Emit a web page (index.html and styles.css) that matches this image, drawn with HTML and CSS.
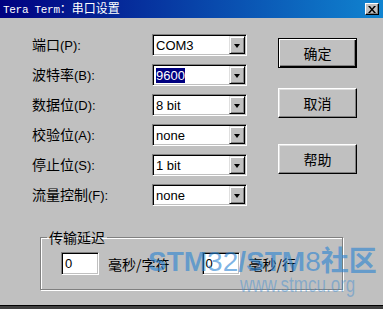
FILE: index.html
```html
<!DOCTYPE html>
<html lang="zh-CN">
<head>
    <meta charset="UTF-8">
    <title>Tera Term: 串口设置</title>
    <link rel="stylesheet" href="styles.css">
</head>
<body>
<div class="window">
    <div class="titlebar">
        <span class="title"><span class="title-en">Tera Term</span>：串口设置</span>
        <span class="close-btn">
            <svg width="8" height="7" viewBox="0 0 8 7"><path d="M0 0h2l2 2.5L6 0h2L5 3.5 8 7H6L4 4.5 2 7H0l3-3.5z" fill="#000"/></svg>
        </span>
    </div>

    <div class="client">
        <div class="top">
            <div class="fields">
                <label>端口<span class="key">(P):</span></label>
                <div class="combo"><span class="combo-text">COM3</span><span class="combo-btn"></span></div>

                <label>波特率<span class="key">(B):</span></label>
                <div class="combo"><span class="combo-text"><span class="selected">9600</span></span><span class="combo-btn"></span></div>

                <label>数据位<span class="key">(D):</span></label>
                <div class="combo"><span class="combo-text">8 bit</span><span class="combo-btn"></span></div>

                <label>校验位<span class="key">(A):</span></label>
                <div class="combo"><span class="combo-text">none</span><span class="combo-btn"></span></div>

                <label>停止位<span class="key">(S):</span></label>
                <div class="combo"><span class="combo-text">1 bit</span><span class="combo-btn"></span></div>

                <label>流量控制<span class="key">(F):</span></label>
                <div class="combo"><span class="combo-text">none</span><span class="combo-btn"></span></div>
            </div>

            <div class="buttons">
                <button class="btn btn-default">确定</button>
                <button class="btn">取消</button>
                <button class="btn btn-help">帮助</button>
            </div>
        </div>

        <fieldset class="delay">
            <legend>传输延迟</legend>
            <div class="delay-row">
                <span class="edit">0</span>
                <span class="unit">毫秒/字符</span>
                <span class="edit edit-second">0</span>
                <span class="unit">毫秒/行</span>
            </div>
        </fieldset>

        <div class="watermark">
            <div class="wm-big">STM<span class="thin">32</span>/STM<span class="thin">8</span>社区</div>
            <div class="wm-url">www.stmcu.org</div>
        </div>
    </div>
</div>
</body>
</html>
```

FILE: styles.css
```css
* {
    margin: 0;
    padding: 0;
    box-sizing: border-box;
}

body {
    background: #404040;
    width: 383px;
    height: 309px;
    overflow: hidden;
}

.window {
    width: 383px;
    height: 306px;
    background: #c0c0c0;
    border-bottom: 1px solid #000;
    display: flex;
    flex-direction: column;
    font-family: "Liberation Sans", "Noto Sans CJK SC", sans-serif;
    font-size: 13px;
    color: #000;
}

/* title bar */
.titlebar {
    height: 18px;
    background: linear-gradient(90deg, #000080, #1084d0);
    display: flex;
    align-items: center;
    justify-content: space-between;
    padding: 0 4px 0 3px;
}

.title {
    color: #fff;
    font-family: "Noto Sans CJK SC", sans-serif;
    font-size: 12px;
    line-height: 16px;
    white-space: nowrap;
}

.title-en {
    font-family: "Liberation Mono", "DejaVu Sans Mono", monospace;
    font-size: 11px;
    letter-spacing: -0.3px;
}

.close-btn {
    width: 14px;
    height: 12px;
    background: #c0c0c0;
    border: 1px solid;
    border-color: #fff #000 #000 #fff;
    box-shadow: inset -1px -1px 0 #808080;
    display: flex;
    align-items: center;
    justify-content: center;
}

/* client area */
.client {
    position: relative;
    flex: 1;
    padding: 16px 0 0 32px;
}

.top {
    display: flex;
}

.fields {
    display: grid;
    grid-template-columns: 120px 95px;
    grid-auto-rows: 22px;
    row-gap: 8px;
}

.fields label {
    align-self: center;
    font-family: "Noto Sans CJK SC", sans-serif;
    font-size: 14px;
    line-height: 16px;
    white-space: nowrap;
}

.key {
    font-family: "Liberation Sans", sans-serif;
    font-size: 13px;
}

.combo {
    display: flex;
    padding: 1px;
    background: #fff;
    border: 1px solid;
    border-color: #808080 #fff #fff #808080;
    box-shadow: inset 1px 1px 0 #000, inset -1px -1px 0 #c0c0c0;
}

.combo-text {
    flex: 1;
    padding-left: 2px;
    display: flex;
    align-items: center;
    font-size: 13px;
}

.selected {
    background: #000080;
    color: #fff;
    line-height: 15px;
}

.combo-btn {
    width: 16px;
    background: #c0c0c0;
    border: 1px solid;
    border-color: #dfdfdf #000 #000 #dfdfdf;
    box-shadow: inset 1px 1px 0 #fff, inset -1px -1px 0 #808080;
    display: flex;
    align-items: center;
    justify-content: center;
}

.combo-btn::after {
    content: '';
    border-left: 3.5px solid transparent;
    border-right: 3.5px solid transparent;
    border-top: 4px solid #000;
    margin-top: 1px;
}

/* buttons */
.buttons {
    display: flex;
    flex-direction: column;
    margin-left: 31px;
    padding-top: 4px;
}

.btn {
    width: 79px;
    height: 30px;
    background: #c0c0c0;
    border: 1px solid;
    border-color: #fff #000 #000 #fff;
    box-shadow: inset -1px -1px 0 #808080, inset 1px 1px 0 #dfdfdf;
    font-family: "Noto Sans CJK SC", sans-serif;
    font-size: 14px;
    color: #000;
    margin-bottom: 20px;
}

.btn-default {
    border: 1px solid #000;
    box-shadow: inset 1px 1px 0 #fff, inset -1px -1px 0 #000, inset -2px -2px 0 #808080;
}

.btn-help {
    margin-top: 6px;
}

/* delay group */
.delay {
    width: 303px;
    margin: 23px 0 0 8px;
    border: 1px solid #808080;
    box-shadow: 1px 1px 0 #fff, inset 1px 1px 0 #fff;
    padding: 0 0 14px 0;
}

.delay legend {
    margin-left: 6px;
    padding: 0 2px;
    font-family: "Noto Sans CJK SC", sans-serif;
    font-size: 14px;
    line-height: 16px;
}

.delay-row {
    display: flex;
    align-items: center;
    margin-top: 7px;
    padding-left: 20px;
}

.edit {
    width: 38px;
    height: 23px;
    background: #fff;
    border: 1px solid;
    border-color: #808080 #fff #fff #808080;
    box-shadow: inset 1px 1px 0 #000, inset -1px -1px 0 #c0c0c0;
    padding-left: 3px;
    display: flex;
    align-items: center;
    font-size: 13px;
}

.unit {
    margin-left: 9px;
    font-family: "Noto Sans CJK SC", sans-serif;
    font-size: 14px;
    white-space: nowrap;
}

.edit-second {
    margin-left: 32px;
}

/* site watermark over the dialog */
.watermark {
    position: absolute;
    left: 148px;
    top: 228px;
    pointer-events: none;
    font-family: "Liberation Sans", "Noto Sans CJK SC", sans-serif;
}

.wm-big {
    font-size: 28px;
    font-weight: 700;
    line-height: 32px;
    color: rgba(40, 130, 210, 0.6);
    white-space: nowrap;
}

.wm-big .thin {
    font-weight: 400;
}

.wm-url {
    margin-left: 92px;
    margin-top: -6px;
    font-size: 17px;
    line-height: 20px;
    color: rgba(60, 140, 210, 0.45);
    transform: scaleY(1.3);
    transform-origin: top left;
}
```
